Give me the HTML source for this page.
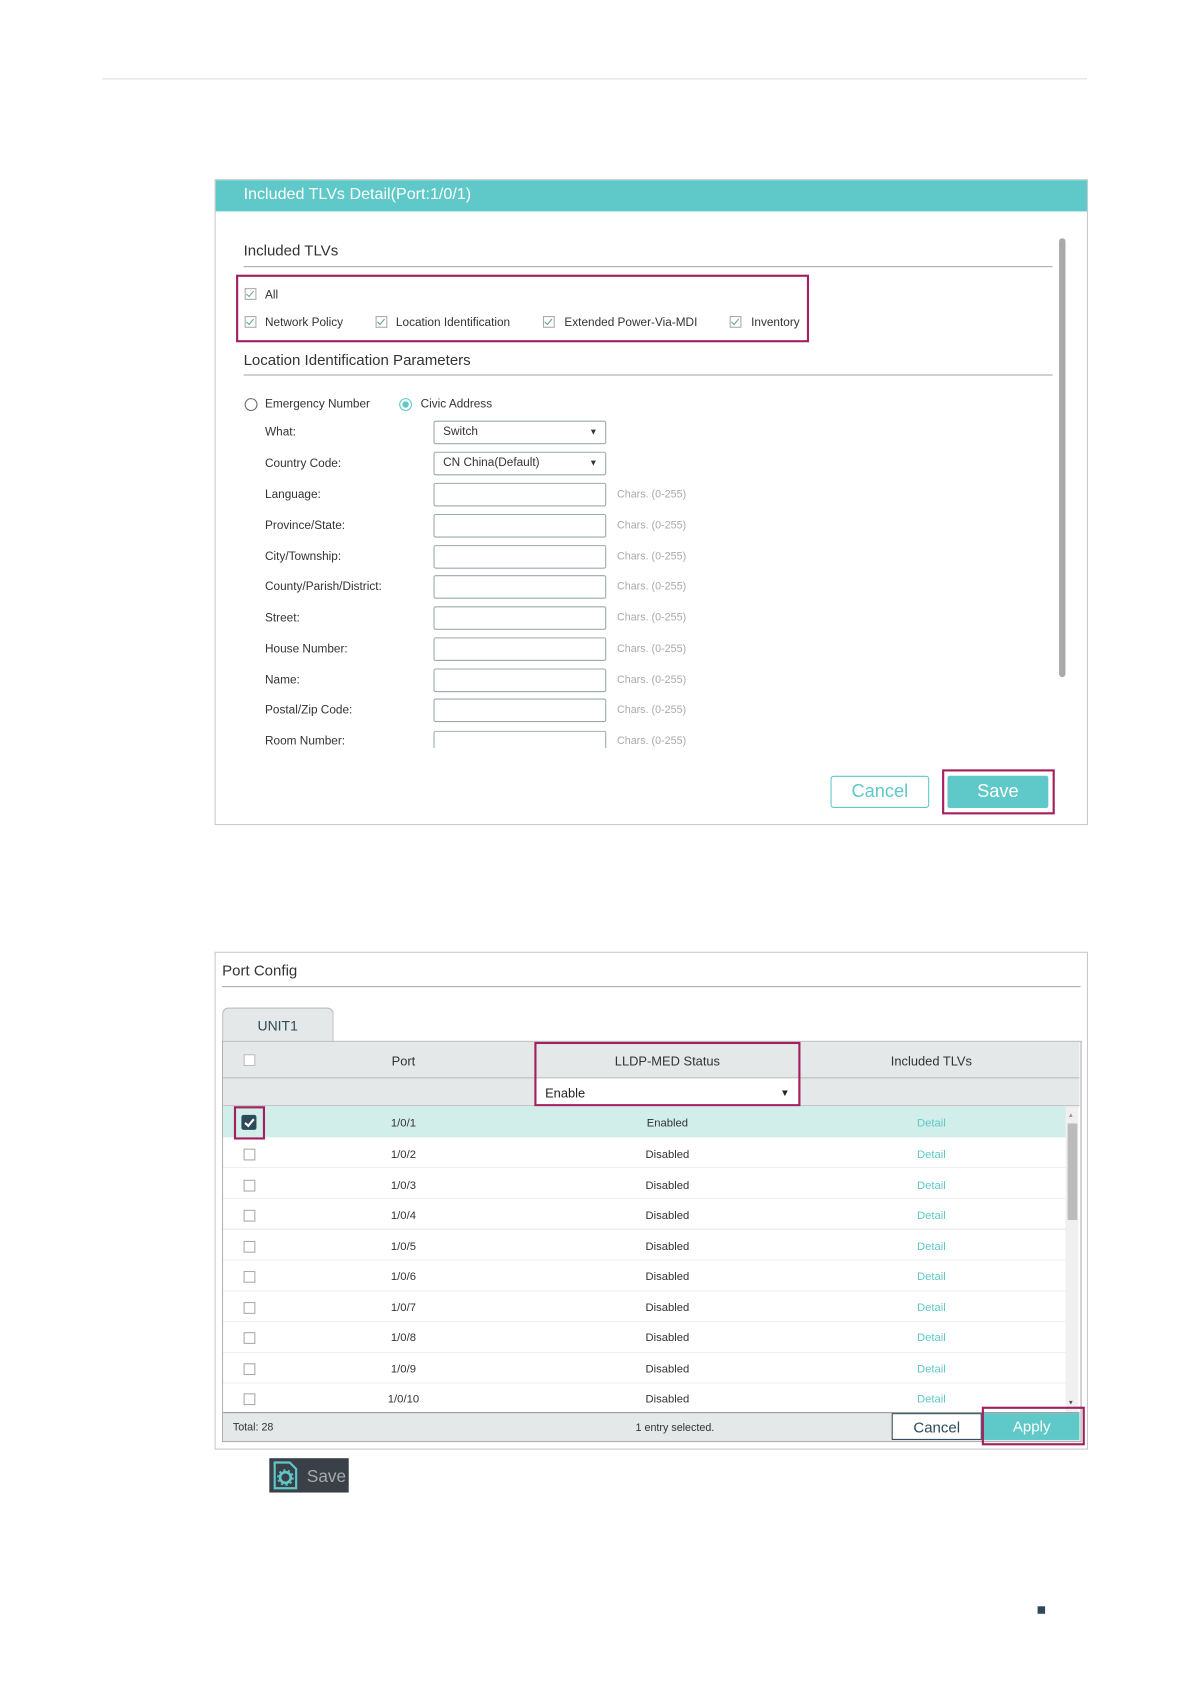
<!DOCTYPE html>
<html><head><meta charset="utf-8"><style>
html,body{margin:0;padding:0;background:#fff;width:1191px;height:1684px;overflow:hidden}
#w{position:absolute;left:0;top:0;width:1110px;height:1570px;transform:scale(1.073);transform-origin:0 0;font-family:"Liberation Sans",sans-serif;color:#333}
.a{position:absolute}
.t{position:absolute;white-space:nowrap;line-height:1;transform:translateY(-50%)}
.cb{position:absolute;width:9px;height:9px;border:1px solid #aaa;background:#fff;transform:translateY(-50%)}
.cb.k::after{content:"";position:absolute;left:2px;top:0px;width:3px;height:6px;border:solid #6a8;border-width:0 1px 1px 0;transform:rotate(40deg)}
.inp{position:absolute;left:404px;width:159px;height:20px;border:1px solid #9aa;border-radius:2px;background:#fff}
.ch{position:absolute;left:575px;font-size:10px;color:#aaa;white-space:nowrap;transform:translateY(-50%)}
.lb{position:absolute;left:247px;font-size:11px;color:#333;white-space:nowrap;transform:translateY(-50%)}
.rt{position:absolute;font-size:10.5px;color:#333;transform:translate(-50%,-50%);white-space:nowrap}
.det{color:#5fc8c8}
.red{position:absolute;border:2px solid #a3205f;box-sizing:border-box}
.rows .rt,.rows .cb{margin-top:2px}
</style></head><body><div id="w">
<div class="a" style="left:95px;top:73px;width:918px;height:1px;background:#ddd"></div>

<div class="a" style="left:200px;top:167px;width:812px;height:600px;border:1px solid #c8c8c8"></div>
<div class="a" style="left:201px;top:168px;width:812px;height:29px;background:#5fc8c8"></div>
<div class="t" style="left:227px;top:181px;font-size:15px;color:#fff">Included TLVs Detail(Port:1/0/1)</div>
<div class="t" style="left:227px;top:233px;font-size:14px;color:#333">Included TLVs</div>
<div class="a" style="left:227px;top:248px;width:754px;height:1px;background:#aaa"></div>
<div class="a" style="left:987px;top:222px;width:6px;height:409px;background:#aaa;border-radius:3px"></div>

<div class="cb k" style="left:228px;top:274px"></div><div class="lb" style="top:275px">All</div>
<div class="cb k" style="left:228px;top:300px"></div><div class="lb" style="top:301px">Network Policy</div>
<div class="cb k" style="left:350px;top:300px"></div><div class="lb" style="left:369px;top:301px">Location Identification</div>
<div class="cb k" style="left:506px;top:300px"></div><div class="lb" style="left:526px;top:301px">Extended Power-Via-MDI</div>
<div class="cb k" style="left:680px;top:300px"></div><div class="lb" style="left:700px;top:301px">Inventory</div>
<div class="red" style="left:220px;top:256px;width:534px;height:63px"></div>

<div class="t" style="left:227px;top:335px;font-size:14px">Location Identification Parameters</div>
<div class="a" style="left:227px;top:349px;width:754px;height:1px;background:#aaa"></div>

<div class="a" style="left:228px;top:371px;width:10px;height:10px;border:1px solid #666;border-radius:50%"></div>
<div class="lb" style="top:377px">Emergency Number</div>
<div class="a" style="left:372px;top:371px;width:10px;height:10px;border:1px solid #5fc8c8;border-radius:50%"></div>
<div class="a" style="left:375px;top:374px;width:6px;height:6px;background:#5fc8c8;border-radius:50%"></div>
<div class="lb" style="left:392px;top:377px">Civic Address</div>

<div class="lb" style="top:403px">What:</div>
<div class="inp" style="top:392px"><span class="t" style="left:8px;top:10px;font-size:11px">Switch</span><span class="t" style="left:144px;top:10px;font-size:8px">▼</span></div>
<div class="lb" style="top:432px">Country Code:</div>
<div class="inp" style="top:421px"><span class="t" style="left:8px;top:10px;font-size:11px">CN China(Default)</span><span class="t" style="left:144px;top:10px;font-size:8px">▼</span></div>

<div class="lb" style="top:461px">Language:</div><div class="inp" style="top:450px"></div><div class="ch" style="top:461px">Chars. (0-255)</div>
<div class="lb" style="top:490px">Province/State:</div><div class="inp" style="top:479px"></div><div class="ch" style="top:490px">Chars. (0-255)</div>
<div class="lb" style="top:519px">City/Township:</div><div class="inp" style="top:508px"></div><div class="ch" style="top:519px">Chars. (0-255)</div>
<div class="lb" style="top:547px">County/Parish/District:</div><div class="inp" style="top:536px"></div><div class="ch" style="top:547px">Chars. (0-255)</div>
<div class="lb" style="top:576px">Street:</div><div class="inp" style="top:565px"></div><div class="ch" style="top:576px">Chars. (0-255)</div>
<div class="lb" style="top:605px">House Number:</div><div class="inp" style="top:594px"></div><div class="ch" style="top:605px">Chars. (0-255)</div>
<div class="lb" style="top:634px">Name:</div><div class="inp" style="top:623px"></div><div class="ch" style="top:634px">Chars. (0-255)</div>
<div class="lb" style="top:662px">Postal/Zip Code:</div><div class="inp" style="top:651px"></div><div class="ch" style="top:662px">Chars. (0-255)</div>
<div class="a" style="left:240px;top:681px;width:420px;height:16px;overflow:hidden">
 <div class="lb" style="left:7px;top:10px">Room Number:</div>
 <div class="a" style="left:164px;top:0;width:159px;height:25px;border:1px solid #9aa;border-radius:2px"></div>
 <div class="ch" style="left:335px;top:10px">Chars. (0-255)</div>
</div>

<div class="a" style="left:774px;top:723px;width:90px;height:28px;border:1px solid #5fc8c8;border-radius:3px;color:#5fc8c8;font-size:17px;text-align:center;line-height:28px">Cancel</div>
<div class="a" style="left:883px;top:723px;width:94px;height:30px;background:#5fc8c8;border-radius:2px;color:#fff;font-size:17px;text-align:center;line-height:30px">Save</div>
<div class="red" style="left:878px;top:717px;width:105px;height:42px"></div>

<div class="a" style="left:200px;top:887px;width:812px;height:462px;border:1px solid #c8c8c8"></div>
<div class="t" style="left:207px;top:904px;font-size:14px">Port Config</div>
<div class="a" style="left:207px;top:919px;width:800px;height:1px;background:#aaa"></div>
<div class="a" style="left:207px;top:939px;width:102px;height:32px;background:#e4e8e8;border:1px solid #bbb;border-bottom:none;border-radius:6px 6px 0 0"></div>
<div class="t" style="left:240px;top:956px;font-size:13px;color:#2d4a5a">UNIT1</div>
<div class="a" style="left:207px;top:970px;width:799px;height:372px;border:1px solid #aaa;border-top:1px solid #bbb"></div>
<div class="a" style="left:208px;top:971px;width:798px;height:59px;background:#e5e8e8"></div>
<div class="a" style="left:208px;top:1004px;width:798px;height:1px;background:#bbb"></div>
<div class="a" style="left:208px;top:1030px;width:798px;height:1px;background:#bbb"></div>
<div class="cb" style="left:227px;top:988px;border-color:#bbb"></div>
<div class="rt" style="left:376px;top:989px;font-size:12px">Port</div>
<div class="rt" style="left:622px;top:989px;font-size:12px">LLDP-MED Status</div>
<div class="rt" style="left:868px;top:989px;font-size:12px">Included TLVs</div>
<div class="a" style="left:499px;top:1005px;width:246px;height:25px;background:#fff"></div>
<div class="t" style="left:508px;top:1019px;font-size:12px;color:#222">Enable</div>
<div class="t" style="left:727px;top:1019px;font-size:9px;color:#222">▼</div>
<div class="red" style="left:498px;top:971px;width:248px;height:60px"></div>

<div class="a" style="left:208px;top:1031px;width:785px;height:29px;background:#d2eeea"></div>
<div class="a" style="left:208px;top:1060px;width:785px;height:256px;background:repeating-linear-gradient(#fff 0,#fff 27.7px,#eee 27.7px,#eee 28.7px)"></div>
<div class="a" style="left:993px;top:1031px;width:12px;height:285px;background:#f0f0f0"></div>
<div class="a" style="left:995px;top:1047px;width:9px;height:90px;background:#bbb"></div>
<div class="t" style="left:995px;top:1040px;font-size:6px;color:#999">▲</div>
<div class="t" style="left:995px;top:1308px;font-size:6px;color:#555">▼</div>

<div class="a" style="left:225px;top:1039px;width:14px;height:14px;background:#2d4a5a;border-radius:2px"></div>
<div class="a" style="left:230px;top:1041px;width:3px;height:7px;border:solid #fff;border-width:0 2px 2px 0;transform:rotate(40deg)"></div>
<div class="red" style="left:218px;top:1031px;width:29px;height:31px"></div>

<div class="rows">
<div class="rt" style="left:376px;top:1045px">1/0/1</div><div class="rt" style="left:622px;top:1045px">Enabled</div><div class="rt det" style="left:868px;top:1045px">Detail</div>
<div class="cb" style="left:227px;top:1074px"></div><div class="rt" style="left:376px;top:1074px">1/0/2</div><div class="rt" style="left:622px;top:1074px">Disabled</div><div class="rt det" style="left:868px;top:1074px">Detail</div>
<div class="cb" style="left:227px;top:1103px"></div><div class="rt" style="left:376px;top:1103px">1/0/3</div><div class="rt" style="left:622px;top:1103px">Disabled</div><div class="rt det" style="left:868px;top:1103px">Detail</div>
<div class="cb" style="left:227px;top:1131px"></div><div class="rt" style="left:376px;top:1131px">1/0/4</div><div class="rt" style="left:622px;top:1131px">Disabled</div><div class="rt det" style="left:868px;top:1131px">Detail</div>
<div class="cb" style="left:227px;top:1160px"></div><div class="rt" style="left:376px;top:1160px">1/0/5</div><div class="rt" style="left:622px;top:1160px">Disabled</div><div class="rt det" style="left:868px;top:1160px">Detail</div>
<div class="cb" style="left:227px;top:1188px"></div><div class="rt" style="left:376px;top:1188px">1/0/6</div><div class="rt" style="left:622px;top:1188px">Disabled</div><div class="rt det" style="left:868px;top:1188px">Detail</div>
<div class="cb" style="left:227px;top:1217px"></div><div class="rt" style="left:376px;top:1217px">1/0/7</div><div class="rt" style="left:622px;top:1217px">Disabled</div><div class="rt det" style="left:868px;top:1217px">Detail</div>
<div class="cb" style="left:227px;top:1245px"></div><div class="rt" style="left:376px;top:1245px">1/0/8</div><div class="rt" style="left:622px;top:1245px">Disabled</div><div class="rt det" style="left:868px;top:1245px">Detail</div>
<div class="cb" style="left:227px;top:1274px"></div><div class="rt" style="left:376px;top:1274px">1/0/9</div><div class="rt" style="left:622px;top:1274px">Disabled</div><div class="rt det" style="left:868px;top:1274px">Detail</div>
<div class="cb" style="left:227px;top:1302px"></div><div class="rt" style="left:376px;top:1302px">1/0/10</div><div class="rt" style="left:622px;top:1302px">Disabled</div><div class="rt det" style="left:868px;top:1302px">Detail</div>
</div>

<div class="a" style="left:208px;top:1316px;width:798px;height:26px;background:#e5e8e8;border-top:1px solid #999"></div>
<div class="t" style="left:217px;top:1331px;font-size:10px">Total: 28</div>
<div class="rt" style="left:629px;top:1331px;font-size:10px">1 entry selected.</div>
<div class="a" style="left:831px;top:1317px;width:84px;height:25px;background:#fff;border:1px solid #2d4a5a;box-sizing:border-box;font-size:14px;text-align:center;line-height:24px;color:#2d4a5a">Cancel</div>
<div class="a" style="left:917px;top:1317px;width:89px;height:25px;background:#5fc8c8;font-size:14px;text-align:center;line-height:25px;color:#fff">Apply</div>
<div class="red" style="left:915px;top:1311px;width:96px;height:36px"></div>

<div class="a" style="left:251px;top:1359px;width:74px;height:32px;background:#3a4048"></div>
<svg class="a" style="left:252px;top:1360px" width="30" height="30" viewBox="0 0 30 30"><path d="M4 3h14l6 6v18H4z" fill="none" stroke="#5fc8c8" stroke-width="2"/><circle cx="14" cy="17" r="5" fill="none" stroke="#5fc8c8" stroke-width="2.5"/><circle cx="14" cy="17" r="7" fill="none" stroke="#5fc8c8" stroke-width="1.5" stroke-dasharray="2 2.4"/></svg>
<div class="t" style="left:286px;top:1377px;font-size:16px;color:#aaa">Save</div>

<div class="a" style="left:967px;top:1497px;width:7px;height:7px;background:#2d4a5a"></div>
</div></body></html>
